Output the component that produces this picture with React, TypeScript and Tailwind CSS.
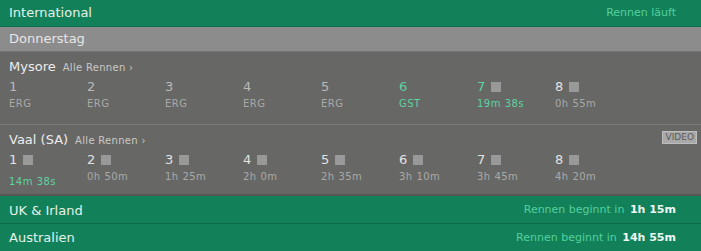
const font = { fontFamily: '"DejaVu Sans", Verdana, sans-serif' }

type Race = { n: number; sub: string; live?: boolean; box?: boolean; done?: boolean }

const mysore: Race[] = [
  { n: 1, sub: "ERG", done: true },
  { n: 2, sub: "ERG", done: true },
  { n: 3, sub: "ERG", done: true },
  { n: 4, sub: "ERG", done: true },
  { n: 5, sub: "ERG", done: true },
  { n: 6, sub: "GST", live: true },
  { n: 7, sub: "19m 38s", live: true, box: true },
  { n: 8, sub: "0h 55m", box: true },
]

const vaal: Race[] = [
  { n: 1, sub: "14m 38s", live: true, box: true },
  { n: 2, sub: "0h 50m", box: true },
  { n: 3, sub: "1h 25m", box: true },
  { n: 4, sub: "2h 0m", box: true },
  { n: 5, sub: "2h 35m", box: true },
  { n: 6, sub: "3h 10m", box: true },
  { n: 7, sub: "3h 45m", box: true },
  { n: 8, sub: "4h 20m", box: true },
]

function RaceCell({ r, lowSub, greenNum }: { r: Race; lowSub?: boolean; greenNum: boolean }) {
  const numColor = r.done ? "text-[#b9b9b7]" : greenNum && r.live ? "text-[#5ed3a2]" : "text-[#e2e2e2]"
  const subColor = r.live ? "text-[#5ed3a2]" : "text-[#a9a9a7]"
  return (
    <div className="w-[78px] shrink-0">
      <div className="flex items-center gap-[6px] h-[18px]">
        <span className={`text-[13px] leading-[18px] ${numColor}`}>{r.n}</span>
        {r.box && <span className="w-[10px] h-[10px] bg-[#9a999a]" />}
      </div>
      <div className={`text-[10px] leading-[16px] tracking-[0.5px] ${subColor} ${lowSub ? "mt-[5px]" : "mt-0"}`}>{r.sub}</div>
    </div>
  )
}

function Meeting({ name, races, video, border }: { name: string; races: Race[]; video?: boolean; border: string }) {
  return (
    <div className={`relative bg-[#676765] px-[9px] ${border}`}>
      <div className="flex items-baseline gap-[7px] pt-[5px] h-[26px]">
        <span className="text-[13px] text-[#ececec]">{name}</span>
        <span className="text-[10px] text-[#c9c9c7] tracking-[0.3px]">Alle Rennen ›</span>
      </div>
      <div className="flex">
        {races.map((r, i) => (
          <RaceCell key={r.n} r={r} lowSub={video && i === 0} greenNum={!video} />
        ))}
      </div>
      {video && (
        <div className="absolute right-[4px] top-[6px] bg-[#a9a9a9] text-[#5a5a5a] text-[9px] leading-[11px] px-[2px] border border-[#bdbdbd]">
          VIDEO
        </div>
      )}
    </div>
  )
}

export default function App() {
  return (
    <div className="w-[701px] h-[251px] overflow-hidden bg-[#676765]" style={font}>
      <div className="h-[27px] bg-[#12815a] border-b border-[#0c6b4a] flex items-center justify-between pl-[9px] pr-[25px]">
        <span className="text-[13px] text-[#e4f2ea]">International</span>
        <span className="text-[11px] text-[#55cf9c]">Rennen läuft</span>
      </div>
      <div className="h-[25px] bg-[#8d8c8d] border-b border-[#767576] flex items-center pl-[9px]">
        <span className="text-[13px] text-[#e6e6e6]">Donnerstag</span>
      </div>
      <div className="h-[73px]">
        <Meeting name="Mysore" races={mysore} border="h-full border-b border-[#7b7b79]" />
      </div>
      <div className="h-[71px]">
        <Meeting name="Vaal (SA)" races={vaal} video border="h-full border-b-2 border-[#575755]" />
      </div>
      <div className="h-[28px] bg-[#12815a] border-b border-[#0c6b4a] flex items-center justify-between pl-[9px] pr-[25px] pt-[2px]">
        <span className="text-[13px] text-[#e4f2ea]">UK &amp; Irland</span>
        <span className="text-[11px] text-[#55cf9c]">
          Rennen beginnt in <span className="font-bold text-[#eef8f2] ml-[2px]">1h 15m</span>
        </span>
      </div>
      <div className="h-[27px] bg-[#12815a] flex items-center justify-between pl-[9px] pr-[25px] pt-[1px]">
        <span className="text-[13px] text-[#e4f2ea]">Australien</span>
        <span className="text-[11px] text-[#55cf9c]">
          Rennen beginnt in <span className="font-bold text-[#eef8f2] ml-[2px]">14h 55m</span>
        </span>
      </div>
    </div>
  )
}
